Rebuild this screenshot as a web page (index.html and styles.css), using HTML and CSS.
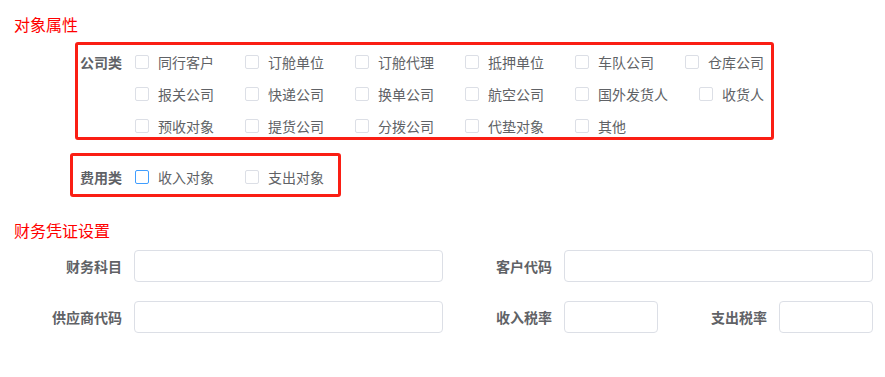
FILE: index.html
```html
<!DOCTYPE html>
<html lang="zh-CN">

<head>
    <meta charset="UTF-8">
    <meta name="viewport" content="width=device-width, initial-scale=1.0">
    <title>对象属性</title>
    <link rel="stylesheet" href="styles.css">
</head>

<body>
    <div class="page">
        <h3 class="section-title">对象属性</h3>

        <div class="mark-box company-box">
            <div class="group">
                <span class="group-label">公司类</span>
                <div class="checks">
                    <div class="check-row">
                        <label class="check"><span class="check-box"></span><span class="check-text">同行客户</span></label>
                        <label class="check"><span class="check-box"></span><span class="check-text">订舱单位</span></label>
                        <label class="check"><span class="check-box"></span><span class="check-text">订舱代理</span></label>
                        <label class="check"><span class="check-box"></span><span class="check-text">抵押单位</span></label>
                        <label class="check"><span class="check-box"></span><span class="check-text">车队公司</span></label>
                        <label class="check"><span class="check-box"></span><span class="check-text">仓库公司</span></label>
                    </div>
                    <div class="check-row">
                        <label class="check"><span class="check-box"></span><span class="check-text">报关公司</span></label>
                        <label class="check"><span class="check-box"></span><span class="check-text">快递公司</span></label>
                        <label class="check"><span class="check-box"></span><span class="check-text">换单公司</span></label>
                        <label class="check"><span class="check-box"></span><span class="check-text">航空公司</span></label>
                        <label class="check"><span class="check-box"></span><span class="check-text">国外发货人</span></label>
                        <label class="check"><span class="check-box"></span><span class="check-text">收货人</span></label>
                    </div>
                    <div class="check-row">
                        <label class="check"><span class="check-box"></span><span class="check-text">预收对象</span></label>
                        <label class="check"><span class="check-box"></span><span class="check-text">提货公司</span></label>
                        <label class="check"><span class="check-box"></span><span class="check-text">分拨公司</span></label>
                        <label class="check"><span class="check-box"></span><span class="check-text">代垫对象</span></label>
                        <label class="check"><span class="check-box"></span><span class="check-text">其他</span></label>
                    </div>
                </div>
            </div>
        </div>

        <div class="mark-box fee-box">
            <div class="group">
                <span class="group-label">费用类</span>
                <div class="checks">
                    <div class="check-row">
                        <label class="check"><span class="check-box is-focus"></span><span class="check-text">收入对象</span></label>
                        <label class="check"><span class="check-box"></span><span class="check-text">支出对象</span></label>
                    </div>
                </div>
            </div>
        </div>

        <h3 class="section-title voucher-title">财务凭证设置</h3>

        <div class="voucher-form">
            <label class="form-label">财务科目</label>
            <input class="form-input" type="text">
            <label class="form-label">客户代码</label>
            <input class="form-input wide" type="text">

            <label class="form-label">供应商代码</label>
            <input class="form-input" type="text">
            <label class="form-label">收入税率</label>
            <input class="form-input" type="text">
            <label class="form-label">支出税率</label>
            <input class="form-input" type="text">
        </div>
    </div>
</body>

</html>
```

FILE: styles.css
```css
* {
    box-sizing: border-box;
}

:root {
    --textColor: #606266;
    --markColor: #fa1e14;
    --borderColor: #dcdfe6;
    --focusColor: #409eff;
}

body {
    margin: 0;
    background: #ffffff;
    color: var(--textColor);
    font-family: "Noto Sans CJK SC", "Liberation Sans", sans-serif;
    font-size: 14px;
}

.page {
    padding: 14px 12px 0 14px;
}

.section-title {
    margin: 0 0 8px;
    color: #ff0000;
    font-size: 16px;
    font-weight: normal;
    line-height: 20px;
}

.mark-box {
    border: 3px solid var(--markColor);
    border-radius: 3px;
}

.company-box {
    margin-left: 61px;
    width: 699px;
    height: 98px;
    padding: 7px 0 0 2px;
}

.fee-box {
    margin: 13px 0 0 56px;
    width: 271px;
    height: 44px;
    padding: 11px 0 0 7px;
}

.group {
    display: flex;
    align-items: flex-start;
}

.group-label {
    width: 42px;
    margin-right: 13px;
    font-weight: bold;
    line-height: 20px;
    white-space: nowrap;
}

.checks {
    display: flex;
    flex-direction: column;
    gap: 12px;
}

.check-row {
    display: flex;
    height: 20px;
    align-items: center;
}

.check {
    display: flex;
    align-items: center;
    margin-right: 30px;
    white-space: nowrap;
    cursor: pointer;
}

.check-box {
    width: 14px;
    height: 14px;
    border: 1px solid var(--borderColor);
    border-radius: 2px;
    background: #ffffff;
}

.check-box.is-focus {
    border-color: var(--focusColor);
}

.check-text {
    padding-left: 9px;
    margin-right: 1px;
    line-height: 20px;
}

.voucher-title {
    margin: 23px 0 10px;
}

.voucher-form {
    display: grid;
    grid-template-columns: 120px 309px 121px 94px 121px 94px;
    grid-auto-rows: 32px;
    row-gap: 19px;
    align-items: center;
}

.form-label {
    padding-right: 12px;
    text-align: right;
    font-weight: bold;
    white-space: nowrap;
}

.form-input {
    height: 32px;
    width: 100%;
    border: 1px solid var(--borderColor);
    border-radius: 4px;
    background: #ffffff;
    padding: 0 15px;
    outline: none;
}

.form-input.wide {
    grid-column: 4 / 7;
}
```
